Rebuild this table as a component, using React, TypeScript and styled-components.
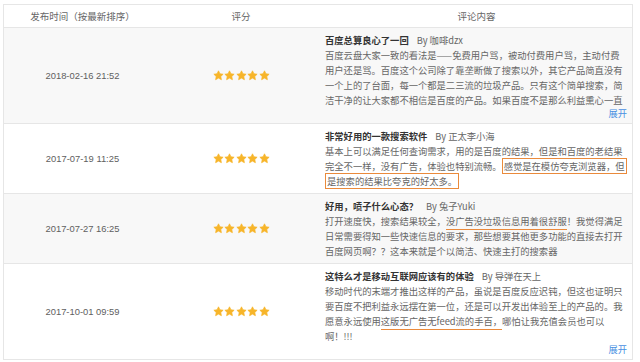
import React from 'react'
import styled, { createGlobalStyle } from 'styled-components'

const GlobalStyle = createGlobalStyle`
  body {
    margin: 0;
    background: #fff;
    font-family: "Noto Sans CJK SC", "Liberation Sans", sans-serif;
  }
`

const Table = styled.div`
  margin: 4px 0 0 3px;
  width: 630px;
  border: 1px solid #e6e6e6;
  border-bottom: none;
  box-sizing: border-box;
`

const Row = styled.div<{ $striped?: boolean }>`
  display: grid;
  grid-template-columns: 157px 160px 1fr;
  background: ${(p) => (p.$striped ? '#f8f8f8' : '#fff')};
  border-bottom: 1px solid #e6e6e6;
`

const HeadCell = styled.div`
  height: 22px;
  line-height: 22px;
  text-align: center;
  font-size: 9.5px;
  color: #666;
`

const TimeCell = styled.div`
  display: flex;
  align-items: center;
  justify-content: center;
  font-family: "Liberation Sans", Arial, sans-serif;
  font-size: 9.4px;
  color: #606060;
`

const RateCell = styled.div`
  display: flex;
  align-items: center;
  justify-content: center;
  gap: 0.5px;
`

const ContentCell = styled.div`
  padding: 5px 5px 4px 4px;
  font-size: 9.3px;
  color: #666;
`

const Title = styled.div`
  line-height: 15px;
  white-space: nowrap;
  color: #333;
  font-weight: bold;
`

const Author = styled.span`
  margin-left: 8px;
  font-weight: normal;
  color: #666;
`

const Line = styled.div`
  line-height: 15px;
  white-space: nowrap;
`

const Boxed = styled.span`
  border: 1.5px solid #ea8a3b;
  padding: 0 1px;
`

const Marked = styled.span`
  border-bottom: 1.5px solid #ea8a3b;
  padding-bottom: 1px;
`

const More = styled.div`
  margin-top: 0;
  line-height: 11px;
  text-align: right;
  color: #4a90e2;
`

const Star = () => (
  <svg width="11" height="11" viewBox="0 0 24 24">
    <path
      d="M12 1.8l3.1 6.5 7 .9-5.1 4.9 1.3 7L12 17.7l-6.3 3.4 1.3-7L1.9 9.2l7-.9z"
      fill="#f7b52a"
      stroke="#f7b52a"
      strokeWidth="1.6"
      strokeLinejoin="round"
    />
  </svg>
)

type Review = {
  time: string
  title: string
  author: string
  lines: React.ReactNode[]
  more?: boolean
}

const reviews: Review[] = [
  {
    time: '2018-02-16 21:52',
    title: '百度总算良心了一回',
    author: 'By 咖啡dzx',
    lines: [
      '百度云盘大家一致的看法是——免费用户骂，被动付费用户骂，主动付费',
      '用户还是骂。百度这个公司除了靠垄断做了搜索以外，其它产品简直没有',
      '一个上的了台面，每一个都是二三流的垃圾产品。只有这个简单搜索，简',
      '洁干净的让大家都不相信是百度的产品。如果百度不是那么利益熏心一直',
    ],
    more: true,
  },
  {
    time: '2017-07-19 11:25',
    title: '非常好用的一款搜索软件',
    author: 'By 正太李小海',
    lines: [
      '基本上可以满足任何查询需求，用的是百度的结果，但是和百度的老结果',
      <>
        完全不一样，没有广告，体验也特别流畅。<Boxed>感觉是在模仿夸克浏览器，但</Boxed>
      </>,
      <>
        <Boxed>是搜索的结果比夸克的好太多。</Boxed>
      </>,
    ],
  },
  {
    time: '2017-07-27 16:25',
    title: '好用，喷子什么心态？',
    author: 'By 兔子Yuki',
    lines: [
      <>
        打开速度快，搜索结果较全，<Marked>没广告没垃圾信息用着很舒服</Marked>！我觉得满足
      </>,
      '日常需要得知一些快速信息的要求，那些想要其他更多功能的直接去打开',
      '百度网页啊？？这本来就是个以简洁、快速主打的搜索器',
    ],
  },
  {
    time: '2017-10-01 09:59',
    title: '这特么才是移动互联网应该有的体验',
    author: 'By 导弹在天上',
    lines: [
      '移动时代的末端才推出这样的产品，虽说是百度反应迟钝，但这也证明只',
      '要百度不把利益永远摆在第一位，还是可以开发出体验至上的产品的。我',
      <>
        愿意永远使用<Marked>这版无广告无feed流的手百，</Marked>哪怕让我充值会员也可以
      </>,
      '啊！!!!',
    ],
    more: true,
  },
]

const App = () => (
  <>
    <GlobalStyle />
    <Table>
      <Row>
        <HeadCell>发布时间（按最新排序）</HeadCell>
        <HeadCell>评分</HeadCell>
        <HeadCell>评论内容</HeadCell>
      </Row>
      {reviews.map((r, i) => (
        <Row key={r.time} $striped={i % 2 === 0}>
          <TimeCell>{r.time}</TimeCell>
          <RateCell>
            {[0, 1, 2, 3, 4].map((n) => (
              <Star key={n} />
            ))}
          </RateCell>
          <ContentCell>
            <Title>
              {r.title}
              <Author>{r.author}</Author>
            </Title>
            {r.lines.map((l, j) => (
              <Line key={j}>{l}</Line>
            ))}
            {r.more && <More>展开</More>}
          </ContentCell>
        </Row>
      ))}
    </Table>
  </>
)

export default App
